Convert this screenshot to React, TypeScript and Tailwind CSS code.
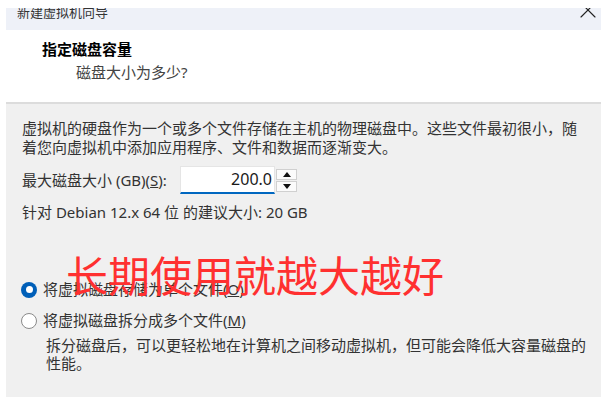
import { X } from 'lucide-react'

function Radio({ checked }: { checked: boolean }) {
  return checked ? (
    <span className="w-[16px] h-[16px] rounded-full bg-[#005fb8] flex items-center justify-center shrink-0">
      <span className="w-[7px] h-[7px] rounded-full bg-white" />
    </span>
  ) : (
    <span className="w-[16px] h-[16px] rounded-full bg-white border border-[#8a8a8a] shrink-0" />
  )
}

export default function App() {
  return (
    <div className="w-[608px] h-[402px] bg-white relative overflow-hidden font-['Noto_Sans','Noto_Sans_CJK_SC',sans-serif]">
      <div className="ml-[6px] mt-[8px] w-[595px] h-[389px] flex flex-col overflow-hidden">
        {/* title bar, cut off at the top */}
        <div className="h-[22px] shrink-0 bg-[#eef1f8] flex items-start justify-between overflow-hidden">
          <span className="ml-[11px] -mt-[2px] text-[13px] leading-[13px] text-[#333]">新建虚拟机向导</span>
          <X size={28} strokeWidth={1} className="-mr-[1px] -mt-[12px] text-[#222] shrink-0" />
        </div>

        {/* header */}
        <div className="h-[74px] shrink-0 bg-white border-b-2 border-[#dcdcdc] pl-[36px] pt-[9px]">
          <div className="text-[15px] leading-[20px] font-bold text-black">指定磁盘容量</div>
          <div className="ml-[34px] mt-[3px] text-[15px] leading-[20px] text-[#444]">磁盘大小为多少?</div>
        </div>

        {/* body */}
        <div className="flex-1 bg-[#f0f0f0] pl-[16px] pr-[14px] pt-[15px] text-[15px] leading-[19px] text-[#333]">
          <p>虚拟机的硬盘作为一个或多个文件存储在主机的物理磁盘中。这些文件最初很小，随着您向虚拟机中添加应用程序、文件和数据而逐渐变大。</p>

          <div className="mt-[9px] flex items-center">
            <span className="w-[158px] shrink-0">
              最大磁盘大小 (GB)(<span className="underline">S</span>):
            </span>
            <div className="w-[95px] h-[28px] bg-white border border-[#e5e5e5] border-b-2 border-b-[#0067c0] flex items-center justify-end pr-[2px] text-[16px] text-[#1a1a1a]">
              200.0
            </div>
            <div className="ml-[1px] w-[21px] flex flex-col gap-[1px]">
              <div className="h-[11px] bg-[#fbfbfb] border border-[#d0d0d0] flex items-center justify-center">
                <span className="w-0 h-0 border-l-[4px] border-r-[4px] border-b-[5px] border-l-transparent border-r-transparent border-b-[#111]" />
              </div>
              <div className="h-[11px] bg-[#fbfbfb] border border-[#d0d0d0] flex items-center justify-center">
                <span className="w-0 h-0 border-l-[4px] border-r-[4px] border-t-[5px] border-l-transparent border-r-transparent border-t-[#111]" />
              </div>
            </div>
          </div>

          <p className="mt-[9px]">针对 Debian 12.x 64 位 的建议大小: 20 GB</p>

          <div className="mt-[58px] flex flex-col gap-[12px]">
            <div className="flex items-center gap-[6px] -ml-[1px]">
              <Radio checked />
              <span>将虚拟磁盘存储为单个文件(<span className="underline">O</span>)</span>
            </div>
            <div className="flex items-center gap-[6px] -ml-[1px]">
              <Radio checked={false} />
              <span>将虚拟磁盘拆分成多个文件(<span className="underline">M</span>)</span>
            </div>
          </div>

          <p className="mt-[6px] pl-[24px] leading-[18px]">拆分磁盘后，可以更轻松地在计算机之间移动虚拟机，但可能会降低大容量磁盘的性能。</p>
        </div>
      </div>

      {/* red annotation over the dialog */}
      <div className="absolute left-[66px] top-[250px] text-[42px] leading-[48px] text-[#ff3030] font-['Noto_Sans_CJK_SC',sans-serif]">
        长期使用就越大越好
      </div>
    </div>
  )
}
